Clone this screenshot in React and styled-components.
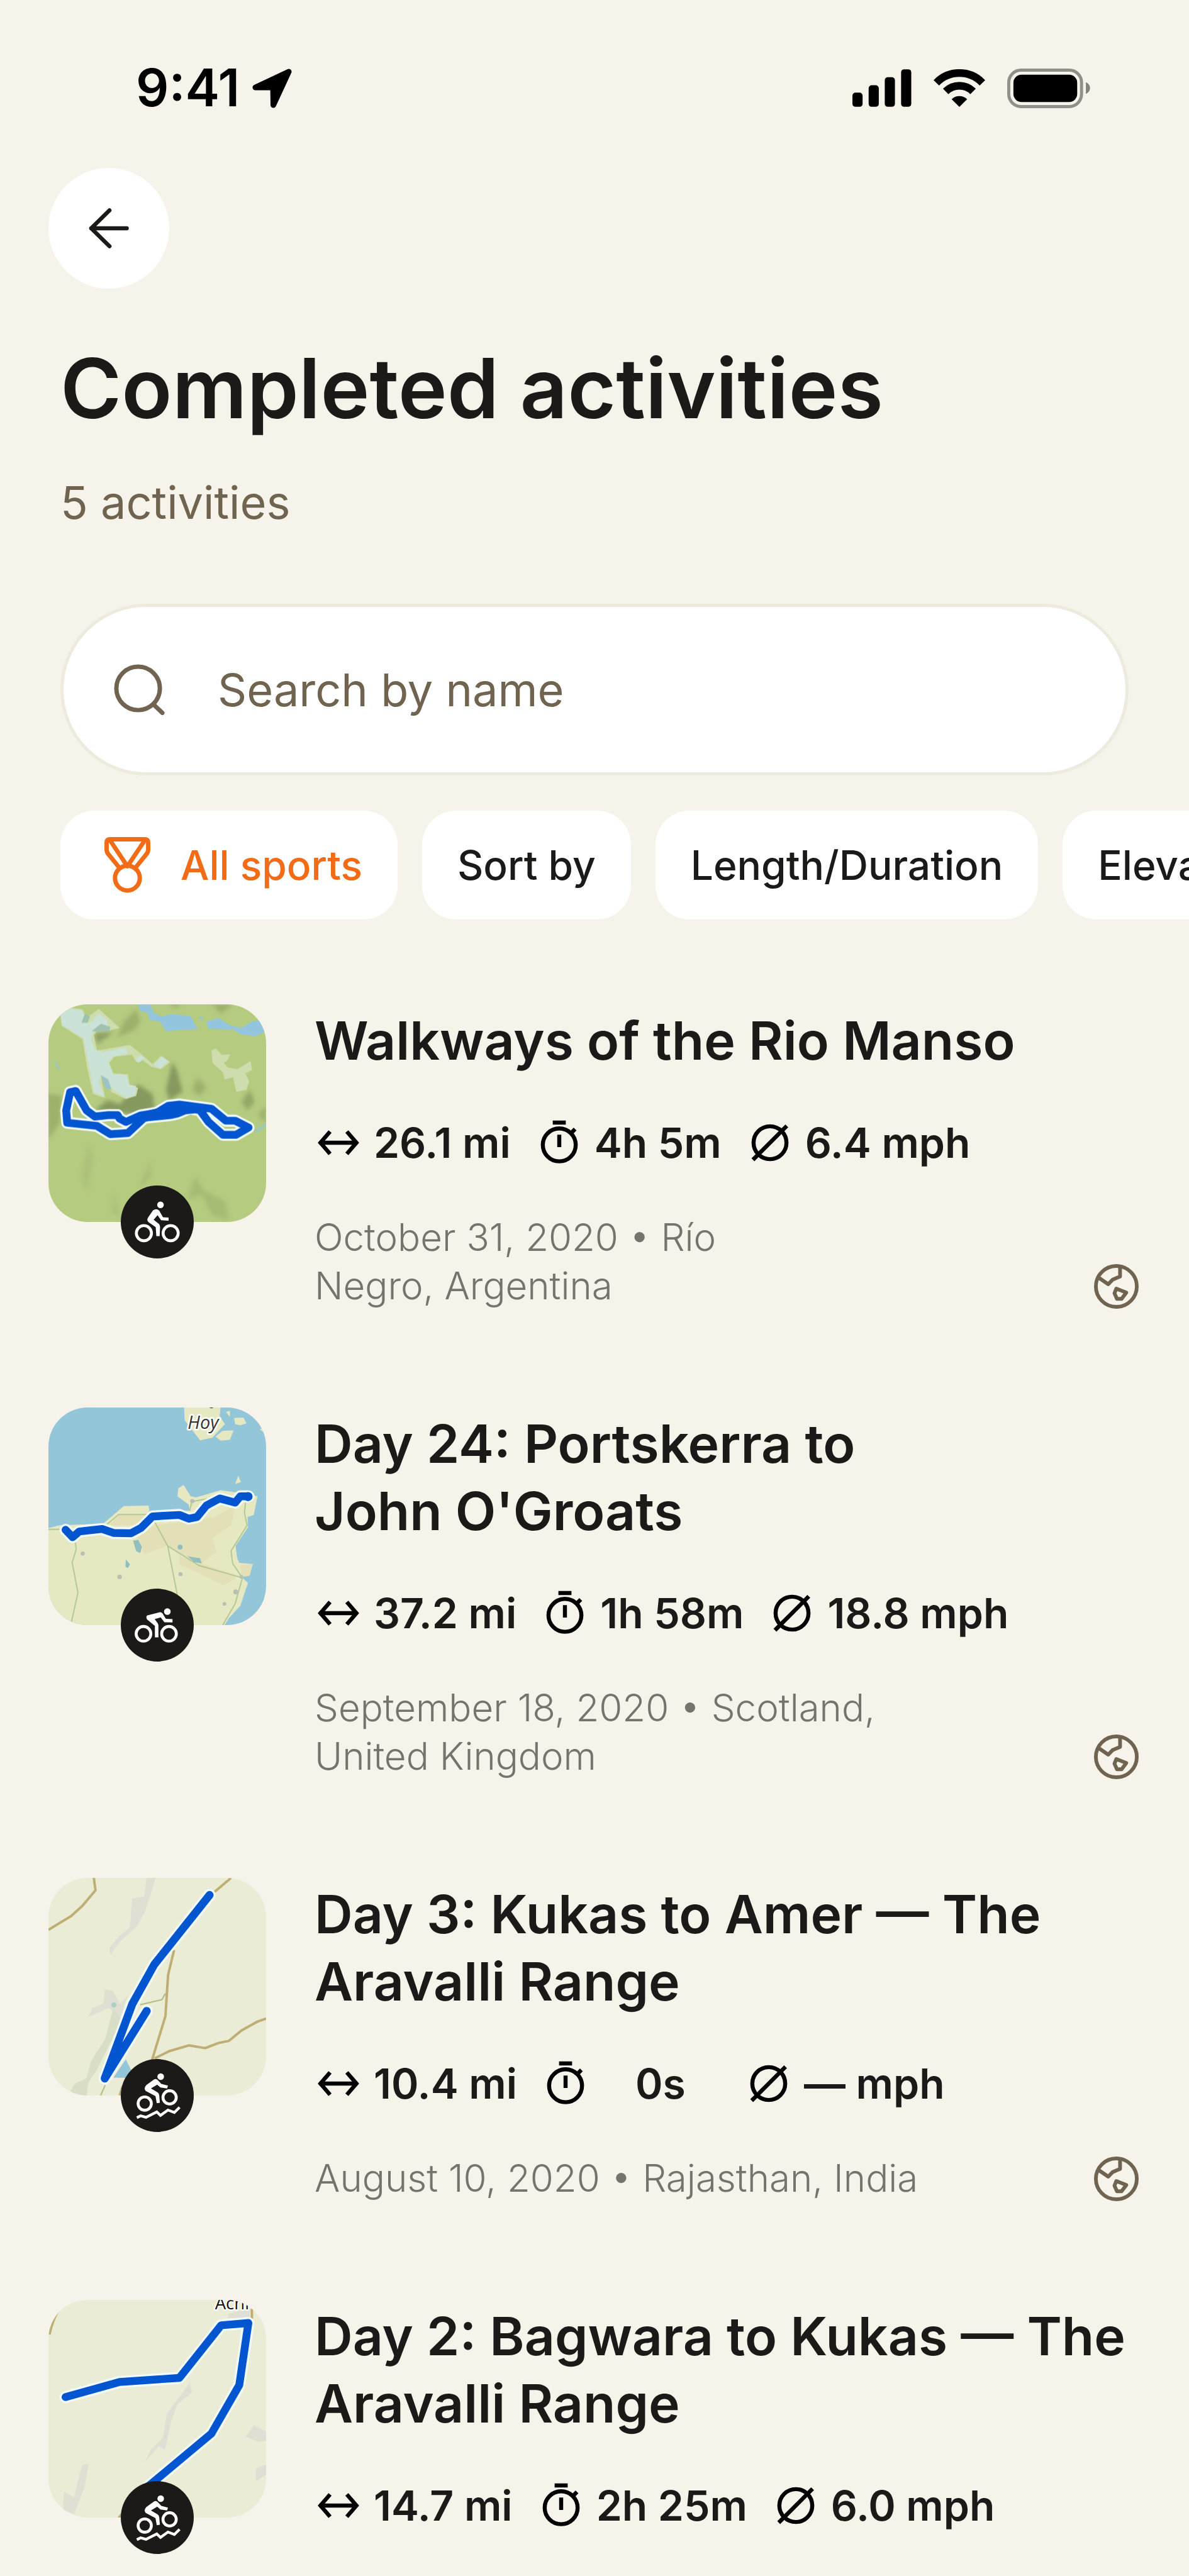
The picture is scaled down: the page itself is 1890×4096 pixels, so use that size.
import React, { useState } from 'react';
import styled, { createGlobalStyle } from 'styled-components';

const GlobalStyle = createGlobalStyle`
  * {
    box-sizing: border-box;
  }
  body {
    margin: 0;
    background: #f6f3eb;
    color: #1b1a18;
    font-family: Inter, 'Liberation Sans', sans-serif;
  }
`;

const Page = styled.main`
  min-height: 100vh;
  overflow: hidden;
`;

const StatusBar = styled.div`
  display: flex;
  align-items: center;
  justify-content: space-between;
  padding: 100px 157px 0 216px;
  height: 180px;
  color: #000;
`;

const StatusGroup = styled.div`
  display: flex;
  align-items: center;
  gap: ${({ $gap }) => $gap}px;
`;

const Time = styled.span`
  font-size: 82px;
  line-height: 80px;
  font-weight: 600;
`;

const Header = styled.header`
  padding: 87px 96px 0;
`;

const BackButton = styled.button`
  display: flex;
  align-items: center;
  justify-content: center;
  width: 192px;
  height: 192px;
  margin-left: -19px;
  padding: 0;
  border: 0;
  border-radius: 50%;
  background: #fff;
  color: #1b1a18;
`;

const Title = styled.h1`
  margin: 78px 0 56px;
  font-size: 132px;
  line-height: 160px;
  font-weight: 600;
`;

const Count = styled.p`
  margin: 0;
  font-size: 72px;
  line-height: 92px;
  color: #706450;
`;

const SearchBox = styled.label`
  display: flex;
  align-items: center;
  gap: 84px;
  height: 273px;
  margin: 115px 96px 56px;
  padding: 0 80px;
  border: 5px solid #edeade;
  border-radius: 137px;
  background: #fff;
  color: #706450;
`;

const SearchInput = styled.input`
  flex: 1;
  min-width: 0;
  padding: 0;
  border: 0;
  outline: 0;
  background: transparent;
  font: 400 72px/92px Inter, 'Liberation Sans', sans-serif;
  color: #1b1a18;

  &::placeholder {
    color: #706450;
    opacity: 1;
  }
`;

const Filters = styled.div`
  display: flex;
  gap: 39px;
  padding-left: 96px;
  overflow: hidden;
`;

const Chip = styled.button`
  display: flex;
  flex-shrink: 0;
  align-items: center;
  gap: 48px;
  height: 173px;
  padding: 0 56px 0 ${({ $active }) => ($active ? 70 : 56)}px;
  border: 0;
  border-radius: 54px;
  background: #fff;
  font: 500 64px/80px Inter, 'Liberation Sans', sans-serif;
  color: ${({ $active }) => ($active ? '#f26b16' : '#1b1a18')};
`;

const List = styled.ul`
  display: flex;
  flex-direction: column;
  gap: 155px;
  margin: 135px 0 0;
  padding: 0 80px 0 77px;
  list-style: none;
`;

const Row = styled.li`
  display: flex;
  align-items: flex-start;
  gap: 77px;
`;

const Thumb = styled.div`
  position: relative;
  flex: 0 0 346px;
  height: 346px;
`;

const MapSvg = styled.svg`
  display: block;
  width: 100%;
  height: 100%;
  border-radius: 62px;
`;

const Badge = styled.svg`
  position: absolute;
  left: 50%;
  bottom: 0;
  width: 116px;
  height: 116px;
  transform: translate(-50%, 50%);
`;

const Details = styled.div`
  flex: 1;
  min-width: 0;
  padding-top: 4px;
`;

const Name = styled.h2`
  margin: 0;
  font-size: 84px;
  line-height: 107px;
  font-weight: 600;
  white-space: pre;
`;

const Stats = styled.div`
  display: flex;
  gap: 39px;
  margin-top: 69px;
  font-size: 66px;
  line-height: 80px;
  font-weight: 600;
  white-space: nowrap;
`;

const Stat = styled.div`
  display: flex;
  align-items: center;
  gap: 18px;
`;

const StatValue = styled.span`
  min-width: 190px;
  text-align: center;
`;

const StatSvg = styled.svg`
  width: 76px;
  height: 76px;
  fill: none;
  stroke: #000;
  stroke-width: 6.5;
`;

const Meta = styled.div`
  display: flex;
  align-items: flex-end;
  justify-content: space-between;
  margin-top: 72px;
`;

const Place = styled.p`
  margin: 0;
  font-size: 60px;
  line-height: 77px;
  font-weight: 300;
  color: #76736d;
  white-space: pre;
`;

const LocationIcon = () => (
  <svg width="63" height="63" viewBox="0 0 64 64" fill="currentColor" stroke="currentColor" strokeWidth="9" strokeLinejoin="round">
    <path d="M59 5 5 30.5H33.500L34 59Z" />
  </svg>
);

const SignalIcon = () => (
  <svg width="94" height="60" viewBox="0 0 96 61">
    <rect x="0" y="38" width="16.500" height="23" rx="5" />
    <rect x="26.300" y="26" width="16.500" height="35" rx="5" />
    <rect x="52.500" y="13" width="16.500" height="48" rx="5" />
    <rect x="79" y="0" width="16.500" height="61" rx="5" />
  </svg>
);

const WifiIcon = () => (
  <svg width="82" height="60" viewBox="0 0 83 61" fill="none" stroke="#000" strokeWidth="12.4">
    <path d="M4.300 22A51.800 51.800 0 0 1 78.700 22" />
    <path d="M19.400 36A31.200 31.200 0 0 1 63.600 36" />
    <path d="M41.500 61 29 48.500A18 18 0 0 1 54 48.500Z" fill="#000" stroke="none" />
  </svg>
);

const BatteryIcon = () => (
  <svg width="132" height="63" viewBox="0 0 134 64">
    <rect x="2.500" y="2.500" width="117.500" height="59" rx="20" fill="none" stroke="#918f89" strokeWidth="5" />
    <rect x="10" y="10" width="103" height="44" rx="13" />
    <path d="M127 22C136 26 136 37 127 41Z" fill="#84827c" />
  </svg>
);

const BackIcon = () => (
  <svg width="64" height="64" viewBox="0 0 64 64" fill="none" stroke="currentColor" strokeWidth="6.5" strokeLinecap="round" strokeLinejoin="round">
    <path d="M33 3.500 4 32 33 60.500M4 32H60.500" />
  </svg>
);

const SearchIcon = () => (
  <svg width="81" height="81" viewBox="0 0 82 82" fill="none" stroke="currentColor" strokeWidth="7" strokeLinecap="round">
    <circle cx="39" cy="39" r="35" />
    <path d="M65 66 78 78.500" />
  </svg>
);

const MedalIcon = () => (
  <svg width="73" height="89" viewBox="0 0 74 90" fill="none" stroke="currentColor" strokeWidth="7" strokeLinejoin="round">
    <path d="M27 53 6 27Q3.500 24 3.500 20V9Q3.500 3.500 9 3.500H65Q70.500 3.500 70.500 9V20Q70.500 24 68 27L47 53" />
    <path d="M9 5 37 47 65 5" />
    <circle cx="37" cy="66" r="20" />
  </svg>
);

const DistanceIcon = () => (
  <StatSvg viewBox="0 0 77 77" aria-hidden="true">
    <path d="M25 20.500 9.500 38.500 25 56.500M52 20.500 67.500 38.500 52 56.500M9.500 38.500H67.500" />
  </StatSvg>
);

const TimerIcon = () => (
  <StatSvg viewBox="0 0 77 77" aria-hidden="true">
    <circle cx="38.500" cy="42" r="26.500" />
    <path d="M28 6H49M38.500 25.500V45.500M56 24.500 64 16.500" />
  </StatSvg>
);

const SpeedIcon = () => (
  <StatSvg viewBox="0 0 77 77" aria-hidden="true">
    <circle cx="38.500" cy="38.500" r="26.500" />
    <path d="M11 66 65.500 11.500" />
  </StatSvg>
);

const GlobeIcon = () => (
  <svg width="71" height="75" viewBox="0 -2 72 76" fill="none" stroke="#706450" strokeWidth="6" strokeLinejoin="round">
    <circle cx="36" cy="36" r="33" />
    <path d="M42 4V20L30 25 23 32.500 7 21.500" />
    <path d="M36 39.500 52 46 44.500 56H37L33 47Z" />
  </svg>
);

const riders = {
  bike: (
    <>
      <g fill="none" stroke="#fff" strokeWidth="14">
        <circle cx="518" cy="1175" r="36.500" />
        <circle cx="647" cy="1175" r="36.500" />
      </g>
      <circle cx="598" cy="1038" r="16" />
      <path d="M562 1065Q578 1053 592 1066L610 1098 637 1100V1115L601 1113 584 1088 565 1110 590 1130Q596 1136 596 1145L594 1189H578L575 1146 540 1122Q530 1112 538 1100Z" />
    </>
  ),
  race: (
    <>
      <g fill="none" stroke="#fff" strokeWidth="14">
        <circle cx="516" cy="1163" r="35.500" />
        <circle cx="639" cy="1163" r="35.500" />
      </g>
      <circle cx="631" cy="1056" r="16" />
      <path d="M533 1075 595 1059Q603 1058 608 1065L624 1091 656 1092V1108L617 1107 599 1084 570 1092 584 1111Q588 1116 588 1124V1180H571V1125L533 1094Q527 1082 533 1075Z" />
    </>
  ),
  mountain: (
    <>
      <g fill="none" stroke="#fff" strokeWidth="14">
        <circle cx="522" cy="1160" r="32" />
        <circle cx="642" cy="1130" r="32" />
        <path d="M484 1228 502 1219 528 1226 580 1200 598 1217 634 1191 665 1203 690 1178" strokeWidth="13" />
      </g>
      <circle cx="599" cy="1030" r="16" />
      <path d="M530 1070 568 1043Q577 1038 584 1046L602 1065 634 1073 630 1087 598 1082 582 1069 552 1087 584 1106Q591 1111 592 1120L595 1156 580 1158 574 1124 527 1099Q515 1086 530 1070Z" />
    </>
  ),
};

const SportBadge = ({ sport }) => (
  <Badge viewBox="406.500 945 352 352" fill="#fff" aria-hidden="true">
    <circle cx="582.500" cy="1121" r="176" fill="#1b1a18" />
    {riders[sport]}
  </Badge>
);

const Route = ({ d, width = 36 }) => (
  <g fill="none" strokeLinecap="round" strokeLinejoin="round">
    <path d={d} stroke="#f1fbff" strokeWidth={width + 20} />
    <path d={d} stroke="#0456d0" strokeWidth={width} />
  </g>
);

const ManzoMap = () => (
  <MapSvg viewBox="55 66 1055 1055" aria-hidden="true">
    <defs>
      <filter id="soft">
        <feGaussianBlur stdDeviation="9" />
      </filter>
    </defs>
    <path fill="#b5cb80" d="M0 0H1200V1200H0Z" />
    <g filter="url(#soft)" fill="#9db06c">
      <path d="M480 90 500 150 470 190 390 225 420 150Z" />
      <path d="M850 66H950L890 110Z" />
      <path d="M640 60H700L670 85Z" />
      <path d="M780 420 820 470 790 510 750 480Z" />
      <path d="M1030 480 1055 540 1020 580 990 540Z" fill="#93a765" />
      <path d="M50 500 120 510 110 640 55 720Z" />
      <path d="M280 205 370 200 290 260Z" fill="#8c9f66" />
      <path d="M655 345 680 390 705 490 640 530 625 480Z" fill="#86995e" />
      <path d="M490 455 560 500 570 570 480 600 280 580 340 530 400 550Z" fill="#86995e" />
      <path d="M550 830 550 900 490 960Z" opacity=".5" />
      <path d="M765 900 810 970 910 1020 930 1110 850 1090 800 990 730 1010Z" opacity=".6" />
      <path d="M250 740 270 820 245 980 215 900Z" opacity=".35" />
      <path d="M370 970 400 1090 360 1080Z" opacity=".3" />
      <path d="M1110 560 1070 600 1110 640Z" />
    </g>
    <g fill="#93c6de">
      <path d="M488 60H545L565 105 600 125 660 112 745 125 778 185 700 190 625 195 595 150 545 140 535 105 500 100Z" />
      <path d="M820 150 880 132 930 165 990 180 1040 150 1110 142V195L1060 220 985 210 955 188 830 185Z" />
      <path d="M780 130 800 125 805 145Z" />
      <path d="M78 325 110 375 100 380Z" opacity=".7" />
      <path d="M1050 680 1110 638V655L1065 690Z" opacity=".6" />
    </g>
    <path fill="#cfdcae" d="M110 110 140 80 220 90 240 130 300 88 400 180 340 195 300 185 275 215 290 290 450 262 520 320 560 355 600 315 645 345 600 380 555 370 510 335 480 345 460 310 375 320 350 350 370 400 440 405 450 460 490 470 480 510 430 525 360 490 310 420 330 520 270 500 240 360 220 235 120 170Z" />
    <path fill="#cbe2d7" d="M115 110 145 85 215 95 238 130 215 158 260 155 300 110 340 140 345 190 270 200 262 240 280 285 320 298 430 275 440 305 370 318 345 345 368 405 432 408 445 455 480 462 475 505 432 520 370 480 312 408 300 440 325 515 275 490 258 400 225 230 120 165Z" />
    <path fill="#cbe2d7" d="M480 330 505 312 520 330 490 350ZM565 360 605 318 635 342 600 375Z" />
    <path fill="#9fc3ae" d="M215 155 232 110 256 125 245 155ZM265 195 310 160 355 175 350 195 290 200Z" />
    <path fill="#9bc4c8" d="M308 408 345 430 360 480 330 470Z" />
    <path fill="#cfdcae" d="M845 290 865 280 895 310 935 308 925 335 905 350 925 372 970 380 1035 340 1042 385 1010 400 1028 440 1015 480 965 490 950 420 910 430 900 395 850 350Z" />
    <Route
      width={38}
      d="M187 486 160 492 141 580 146 640 290 655 355 695 440 690 520 615 650 602 680 595 740 570 790 580 830 635 900 698 965 698 1025 663 960 630 915 630 845 572 690 552 635 558 580 592 500 605 430 636 400 620 390 603 345 603 280 610 240 580 187 486"
    />
    <path d="M500 615 640 582 760 570" fill="none" stroke="#0456d0" strokeWidth="50" />
  </MapSvg>
);

const CoastMap = () => (
  <MapSvg viewBox="55 69 1055 1055" aria-hidden="true">
    <path fill="#94c6da" d="M0 0H1200V1200H0Z" />
    <path
      fill="#e6e8c1"
      d="M50 655 110 640 320 632 420 547 540 545 545 575 740 570 735 540 680 500 685 460 710 445 745 500 770 505 890 470 1000 485 1068 500 1050 590 1020 600 1022 650 962 740 970 800 980 822 1045 828 1030 885 990 890 1022 920 985 1030 930 1090 905 1130H50Z"
    />
    <path fill="#e3dfb6" d="M400 590 530 590 500 640 350 640ZM490 700 560 640 700 625 860 600 960 545 940 640 850 700 870 770 790 830 700 780 630 740 520 780Z" />
    <path fill="#e3dfb6" d="M690 790 960 880 960 900 900 930 760 860 690 830ZM985 830H1040L1030 885 990 890Z" />
    <path fill="#e6e8c1" d="M712 60H890L885 110 910 150 850 215 790 228 715 130ZM865 210 900 182 952 180 935 225 890 230ZM955 120 1000 118 1015 145 985 155 960 150ZM915 90 935 85 935 115ZM960 440 975 400 988 430ZM1080 175 1110 160V200Z" />
    <g fill="none" stroke="#b4c893" strokeWidth="6">
      <path d="M185 720 190 755 170 820 198 968 163 1124" />
      <path d="M570 625 633 740 680 980M633 740 785 835 995 895M1010 530 1005 580 1018 640 940 765 948 825 995 895 960 1020 900 1124" />
      <path d="M340 635 395 588H540M740 570 750 525 890 500M55 660H120" />
    </g>
    <g fill="#91bfc0">
      <path d="M465 715 490 710 508 745 500 775 480 765ZM430 805 450 830 440 848 428 840ZM730 790 790 800 798 825 760 818Z" />
      <circle cx="693" cy="746" r="12" />
    </g>
    <g fill="#b9bfb2">
      <circle cx="400" cy="890" r="11" />
      <circle cx="221" cy="777" r="10" />
      <circle cx="695" cy="877" r="10" />
      <circle cx="963" cy="963" r="12" />
      <circle cx="908" cy="1021" r="9" />
      <circle cx="752" cy="523" r="10" />
      <circle cx="990" cy="890" r="9" />
    </g>
    <text x="730" y="172" fontFamily="'Open Sans', 'Noto Sans', sans-serif" fontStyle="italic" fontSize="88" fill="#333" stroke="#fff" strokeWidth="16" strokeLinejoin="round" paintOrder="stroke">
      Hoy
    </text>
    <path d="M832 66Q845 80 858 66Z" fill="#333" />
    <Route width={38} d="M138 662 172 698 205 670 315 658 370 677 455 679 505 652 560 597 690 590 735 608 775 600 820 545 885 510 960 530 985 500 1025 500" />
    <circle cx="1022" cy="501" r="22" fill="#0456d0" />
  </MapSvg>
);

const AmerMap = () => (
  <MapSvg viewBox="55 70 1055 1055" aria-hidden="true">
    <path fill="#eaecd6" d="M0 0H1200V1200H0Z" />
    <path fill="#dfe0d3" d="M530 70H575L550 150 520 240 480 310 400 380 355 445 350 410 400 350 450 310 460 170 520 160Z" />
    <path fill="#dfe0d3" d="M330 610 370 620 400 680 440 640 400 760 350 700 245 745 270 700 320 680Z" />
    <path fill="#d8dfc6" d="M370 700 410 760 340 900 290 1000 250 1060 240 1124H150L180 1070 240 1040 260 960 330 850Z" />
    <path fill="#94c6da" d="M370 1038 430 950 455 1000 440 1040Z" />
    <circle cx="372" cy="686" r="13" fill="#afcfc9" />
    <g fill="none" stroke="#bfae74" strokeWidth="12" strokeLinejoin="round">
      <path d="M275 70 283 130 220 205 165 255 55 322" />
      <path d="M860 138 940 70" />
      <path d="M664 420 635 540 622 740 555 960M570 945 640 910 735 882 815 895 880 870 930 860 990 810 1065 768 1110 752" />
      <path d="M400 1124 415 1080" />
    </g>
    <path d="M500 685 605 660 622 630M330 1075 308 1124" fill="none" stroke="#b7bf88" strokeWidth="7" />
    <Route width={39} d="M836 153 568 490 462 680 328 1042 531 715" />
  </MapSvg>
);

const BagwaraMap = () => (
  <MapSvg viewBox="55 72 1055 1055" aria-hidden="true">
    <path fill="#eaecd6" d="M0 0H1200V1200H0Z" />
    <path fill="#dfe0d3" d="M740 470 750 520 680 580 650 660 620 800 590 780 520 862 550 800 610 740 630 620 700 530ZM220 870H250L230 980 180 1110 125 1090 130 1000 180 1030 200 940ZM1010 735 1050 680 1110 710V755L1070 760ZM1060 890 1110 870V920L1060 950ZM930 140 1030 110 1030 165H920Z" />
    <g fill="none" stroke="#bfae74" strokeWidth="12">
      <path d="M115 110Q80 150 60 240M1041 115V165M395 1130 415 1105" />
    </g>
    <text x="862" y="117" fontFamily="'Open Sans', 'Noto Sans', sans-serif" fontSize="84" fill="#111" stroke="#fff" strokeWidth="12" strokeLinejoin="round" paintOrder="stroke">
      Achr
    </text>
    <Route width={38} d="M138 543 400 470 690 450 892 195 1024 184 980 485 845 720 540 975" />
  </MapSvg>
);

const activities = [
  {
    name: 'Walkways of the Rio Manso',
    distance: '26.1 mi',
    time: '4h 5m',
    speed: '6.4 mph',
    place: 'October 31, 2020 • Río\nNegro, Argentina',
    sport: 'bike',
    Map: ManzoMap,
  },
  {
    name: "Day 24: Portskerra to\nJohn O'Groats",
    distance: '37.2 mi',
    time: '1h 58m',
    speed: '18.8 mph',
    place: 'September 18, 2020 • Scotland,\nUnited Kingdom',
    sport: 'race',
    Map: CoastMap,
  },
  {
    name: 'Day 3: Kukas to Amer — The\nAravalli Range',
    distance: '10.4 mi',
    time: '0s',
    speed: '— mph',
    place: 'August 10, 2020 • Rajasthan, India',
    sport: 'mountain',
    Map: AmerMap,
  },
  {
    name: 'Day 2: Bagwara to Kukas — The\nAravalli Range',
    distance: '14.7 mi',
    time: '2h 25m',
    speed: '6.0 mph',
    sport: 'mountain',
    Map: BagwaraMap,
  },
];

const Activity = ({ name, distance, time, speed, place, sport, Map }) => (
  <Row>
    <Thumb>
      <Map />
      <SportBadge sport={sport} />
    </Thumb>
    <Details>
      <Name>{name}</Name>
      <Stats>
        <Stat>
          <DistanceIcon />
          <StatValue>{distance}</StatValue>
        </Stat>
        <Stat>
          <TimerIcon />
          <StatValue>{time}</StatValue>
        </Stat>
        <Stat>
          <SpeedIcon />
          <StatValue>{speed}</StatValue>
        </Stat>
      </Stats>
      {place && (
        <Meta>
          <Place>{place}</Place>
          <GlobeIcon />
        </Meta>
      )}
    </Details>
  </Row>
);

const App = () => {
  const [query, setQuery] = useState('');
  return (
    <Page>
      <GlobalStyle />
      <StatusBar>
        <StatusGroup $gap={20}>
          <Time>9:41</Time>
          <LocationIcon />
        </StatusGroup>
        <StatusGroup $gap={35}>
          <SignalIcon />
          <WifiIcon />
          <BatteryIcon />
        </StatusGroup>
      </StatusBar>
      <Header>
        <BackButton type="button" aria-label="Back">
          <BackIcon />
        </BackButton>
        <Title>Completed activities</Title>
        <Count>5 activities</Count>
      </Header>
      <SearchBox htmlFor="search">
        <SearchIcon />
        <SearchInput
          id="search"
          type="text"
          aria-label="Search by name"
          placeholder="Search by name"
          value={query}
          onChange={e => setQuery(e.target.value)}
        />
      </SearchBox>
      <Filters>
        <Chip type="button" $active>
          <MedalIcon />
          All sports
        </Chip>
        <Chip type="button">Sort by</Chip>
        <Chip type="button">Length/Duration</Chip>
        <Chip type="button">Elevation</Chip>
      </Filters>
      <List>
        {activities.map(activity => (
          <Activity key={activity.name} {...activity} />
        ))}
      </List>
    </Page>
  );
};

export default App;
